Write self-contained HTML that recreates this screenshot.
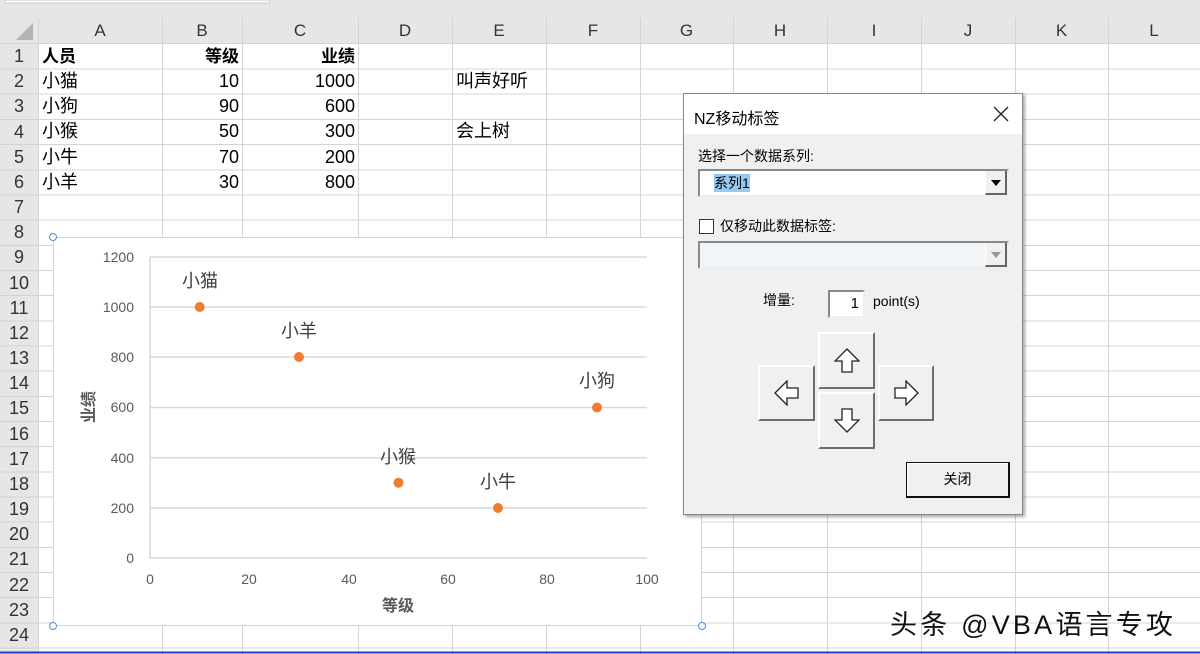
<!DOCTYPE html>
<html><head><meta charset="utf-8"><style>
*{margin:0;padding:0;box-sizing:border-box}
body{width:1200px;height:654px;overflow:hidden;background:#fff;position:relative;font-family:"Liberation Sans","Noto Sans CJK SC",sans-serif}
.a{position:absolute;white-space:nowrap}
.c{font-size:18px;color:#000;line-height:25px}
.h{font-size:17px;color:#333;line-height:25px;text-align:center}
.btn{position:absolute;background:#f0f0f0;border-top:2px solid #fff;border-left:2px solid #fff;border-right:2px solid #6e6e6e;border-bottom:2px solid #6e6e6e}
</style></head><body>
<svg class="a" style="left:0;top:0" width="1200" height="654">
<rect x="0" y="0" width="1200" height="18" fill="#e6e6e6"/>
<rect x="5" y="0" width="265" height="3" fill="#fff" stroke="#c8c8c8"/>
<rect x="0" y="18" width="1200" height="26" fill="#e6e6e6"/>
<rect x="0" y="18" width="38" height="636" fill="#e6e6e6"/>
<polygon points="33,23 33,40 16,40" fill="#b4b4b4"/>
<g stroke="#d4d4d4" stroke-width="1">
<line x1="38.5" y1="18" x2="38.5" y2="654"/>
<line x1="162.5" y1="18" x2="162.5" y2="654"/><line x1="242.5" y1="18" x2="242.5" y2="654"/>
<line x1="358.5" y1="18" x2="358.5" y2="654"/><line x1="452.5" y1="18" x2="452.5" y2="654"/>
<line x1="546.5" y1="18" x2="546.5" y2="654"/><line x1="640.5" y1="18" x2="640.5" y2="654"/>
<line x1="733.5" y1="18" x2="733.5" y2="654"/><line x1="827.5" y1="18" x2="827.5" y2="654"/>
<line x1="921.5" y1="18" x2="921.5" y2="654"/><line x1="1015.5" y1="18" x2="1015.5" y2="654"/>
<line x1="1108.5" y1="18" x2="1108.5" y2="654"/>
</g>
<g stroke="#d4d4d4">
<line x1="0" y1="43.5" x2="1200" y2="43.5"/><line x1="0" y1="69" x2="1200" y2="69"/><line x1="0" y1="94" x2="1200" y2="94"/><line x1="0" y1="119.5" x2="1200" y2="119.5"/><line x1="0" y1="144.5" x2="1200" y2="144.5"/><line x1="0" y1="170" x2="1200" y2="170"/><line x1="0" y1="195" x2="1200" y2="195"/><line x1="0" y1="220" x2="1200" y2="220"/><line x1="0" y1="245.5" x2="1200" y2="245.5"/><line x1="0" y1="270.5" x2="1200" y2="270.5"/><line x1="0" y1="295.5" x2="1200" y2="295.5"/><line x1="0" y1="321" x2="1200" y2="321"/><line x1="0" y1="346" x2="1200" y2="346"/><line x1="0" y1="371" x2="1200" y2="371"/><line x1="0" y1="396.5" x2="1200" y2="396.5"/><line x1="0" y1="421.5" x2="1200" y2="421.5"/><line x1="0" y1="446.5" x2="1200" y2="446.5"/><line x1="0" y1="472" x2="1200" y2="472"/><line x1="0" y1="497" x2="1200" y2="497"/><line x1="0" y1="522" x2="1200" y2="522"/><line x1="0" y1="547.5" x2="1200" y2="547.5"/><line x1="0" y1="572.5" x2="1200" y2="572.5"/><line x1="0" y1="597.5" x2="1200" y2="597.5"/><line x1="0" y1="623" x2="1200" y2="623"/><line x1="0" y1="648" x2="1200" y2="648"/>
</g>
<line x1="0" y1="652.5" x2="1200" y2="652.5" stroke="#1a3fd0" stroke-width="2"/>
<rect x="53.5" y="237.5" width="648" height="388" fill="#fff" stroke="#d4d4d4"/>
<g stroke="#d9d9d9" stroke-width="1.5">
<line x1="150" y1="257" x2="647" y2="257"/><line x1="150" y1="307" x2="647" y2="307"/><line x1="150" y1="357" x2="647" y2="357"/><line x1="150" y1="407.5" x2="647" y2="407.5"/><line x1="150" y1="457.7" x2="647" y2="457.7"/><line x1="150" y1="508" x2="647" y2="508"/><line x1="150" y1="558" x2="647" y2="558"/><line x1="150" y1="257" x2="150" y2="558"/>
</g>
<g fill="#ed7d31"><circle cx="199.7" cy="307" r="5"/><circle cx="299" cy="357" r="5"/><circle cx="597" cy="407.5" r="5"/><circle cx="398.5" cy="482.7" r="5"/><circle cx="498" cy="508" r="5"/></g>
<g fill="#fff" stroke="#4a90d9" stroke-width="1"><circle cx="53" cy="237" r="3.5"/><circle cx="53" cy="626" r="3.5"/><circle cx="702" cy="626" r="3.5"/></g>
<g font-family="Liberation Sans,sans-serif" font-size="14" fill="#595959" text-anchor="end">
<text x="134" y="262">1200</text><text x="134" y="312">1000</text><text x="134" y="362">800</text><text x="134" y="412">600</text><text x="134" y="463">400</text><text x="134" y="513">200</text><text x="134" y="563">0</text></g>
<g font-family="Liberation Sans,sans-serif" font-size="14" fill="#595959" text-anchor="middle">
<text x="150" y="584">0</text><text x="249" y="584">20</text><text x="349" y="584">40</text><text x="448" y="584">60</text><text x="547" y="584">80</text><text x="647" y="584">100</text></g>
<g font-family="Liberation Sans,Noto Sans CJK SC,sans-serif" font-size="18" fill="#404040" text-anchor="middle">
<text x="200" y="287">小猫</text><text x="299" y="337">小羊</text><text x="597" y="387">小狗</text><text x="398" y="463">小猴</text><text x="498" y="488">小牛</text></g>
<text x="398" y="611" font-family="Noto Sans CJK SC,sans-serif" font-size="16" font-weight="bold" fill="#595959" text-anchor="middle">等级</text>
<text transform="translate(94,407) rotate(-90)" font-family="Noto Sans CJK SC,sans-serif" font-size="16" font-weight="bold" fill="#595959" text-anchor="middle">业绩</text>
</svg>
<div class="a h" style="left:38px;top:18px;width:124px">A</div>
<div class="a h" style="left:162px;top:18px;width:80px">B</div>
<div class="a h" style="left:242px;top:18px;width:116px">C</div>
<div class="a h" style="left:358px;top:18px;width:94px">D</div>
<div class="a h" style="left:452px;top:18px;width:94px">E</div>
<div class="a h" style="left:546px;top:18px;width:94px">F</div>
<div class="a h" style="left:640px;top:18px;width:93px">G</div>
<div class="a h" style="left:733px;top:18px;width:94px">H</div>
<div class="a h" style="left:827px;top:18px;width:94px">I</div>
<div class="a h" style="left:921px;top:18px;width:94px">J</div>
<div class="a h" style="left:1015px;top:18px;width:93px">K</div>
<div class="a h" style="left:1108px;top:18px;width:92px">L</div>
<div class="a h" style="left:0;top:44px;width:38px;line-height:25.17px;font-size:18px">1<br>2<br>3<br>4<br>5<br>6<br>7<br>8<br>9<br>10<br>11<br>12<br>13<br>14<br>15<br>16<br>17<br>18<br>19<br>20<br>21<br>22<br>23<br>24</div>
<div class="a c" style="left:42px;top:44px;font-weight:bold;font-size:17px">人员</div>
<div class="a c" style="left:162px;top:44px;width:77px;text-align:right;font-weight:bold;font-size:17px">等级</div>
<div class="a c" style="left:242px;top:44px;width:113px;text-align:right;font-weight:bold;font-size:17px">业绩</div>
<div class="a c" style="left:42px;top:69px;line-height:25.17px">小猫<br>小狗<br>小猴<br>小牛<br>小羊</div>
<div class="a c" style="left:162px;top:69px;width:77px;text-align:right;line-height:25.17px">10<br>90<br>50<br>70<br>30</div>
<div class="a c" style="left:242px;top:69px;width:113px;text-align:right;line-height:25.17px">1000<br>600<br>300<br>200<br>800</div>
<div class="a c" style="left:456px;top:69px">叫声好听</div>
<div class="a c" style="left:456px;top:119px">会上树</div>
<div class="a" style="left:890px;top:603px;font-size:27px;letter-spacing:3.2px;color:#111;text-shadow:1px 1px 0 #fff,-1px -1px 0 #fff">头条 @VBA语言专攻</div>
<div class="a" style="left:683px;top:93px;width:340px;height:422px;background:#f0f0f0;border:1px solid #888;box-shadow:2px 2px 3px rgba(0,0,0,.35)">
 <div class="a" style="left:0;top:0;width:338px;height:40px;background:#fff"></div>
 <div class="a" style="left:10px;top:11px;font-size:16px;color:#000">NZ移动标签</div>
 <svg class="a" style="left:309px;top:12px" width="16" height="16"><path d="M1 1L15 15M15 1L1 15" stroke="#222" stroke-width="1.3"/></svg>
 <div class="a" style="left:14px;top:52px;font-size:14px;color:#000">选择一个数据系列:</div>
 <div class="a" style="left:14px;top:75px;width:311px;height:28px;background:#fff;border:2px solid #888;border-right-color:#eee;border-bottom-color:#eee">
  <span class="a" style="left:14px;top:3px;font-size:14px;background:#99c9ef;line-height:18px">系列1</span>
  <div class="a" style="right:0;top:0;width:22px;height:24px;background:#f0f0f0;border-right:2px solid #666;border-bottom:2px solid #666;border-left:1px solid #fff"><svg width="20" height="22"><polygon points="5,9 15,9 10,15" fill="#000"/></svg></div>
 </div>
 <div class="a" style="left:15px;top:125px;width:15px;height:15px;background:#fff;border:1px solid #333"></div>
 <div class="a" style="left:36px;top:122px;font-size:14px;color:#000">仅移动此数据标签:</div>
 <div class="a" style="left:14px;top:147px;width:311px;height:28px;background:#f2f5f8;border:2px solid #888;border-right-color:#eee;border-bottom-color:#eee">
  <div class="a" style="right:0;top:0;width:22px;height:24px;background:#f0f0f0;border-right:2px solid #666;border-bottom:2px solid #666;border-left:1px solid #fff"><svg width="20" height="22"><polygon points="5,9 15,9 10,15" fill="#999"/></svg></div>
 </div>
 <div class="a" style="left:79px;top:196px;font-size:14px;color:#000">增量:</div>
 <div class="a" style="left:144px;top:196px;width:37px;height:28px;background:#fff;border:2px solid #888;border-right-color:#eee;border-bottom-color:#eee;text-align:right;padding-right:4px;font-size:15px;line-height:23px">1</div>
 <div class="a" style="left:189px;top:199px;font-size:14px;color:#000">point(s)</div>
 <div class="btn" style="left:134px;top:238px;width:57px;height:57px"><svg class="a" style="left:14px;top:14px" width="26" height="26"><path d="M13 1L25 13H18V24H8V13H1Z" fill="#fff" stroke="#222" stroke-width="1.3"/></svg></div>
 <div class="btn" style="left:74px;top:271px;width:57px;height:56px"><svg class="a" style="left:14px;top:13px" width="26" height="26"><path d="M1 13L13 1V8H24V18H13V25Z" fill="#fff" stroke="#222" stroke-width="1.3"/></svg></div>
 <div class="btn" style="left:194px;top:271px;width:56px;height:56px"><svg class="a" style="left:13px;top:13px" width="26" height="26"><path d="M25 13L13 1V8H2V18H13V25Z" fill="#fff" stroke="#222" stroke-width="1.3"/></svg></div>
 <div class="btn" style="left:134px;top:298px;width:57px;height:57px"><svg class="a" style="left:14px;top:13px" width="26" height="26"><path d="M13 25L25 13H18V2H8V13H1Z" fill="#fff" stroke="#222" stroke-width="1.3"/></svg></div>
 <div class="a" style="left:222px;top:368px;width:104px;height:36px;background:#f0f0f0;border:1px solid #111;border-right:2px solid #111;border-bottom:2px solid #111;text-align:center;line-height:32px;font-size:14px;box-shadow:inset 1px 1px 0 #fff">关闭</div>
</div>
</body></html>
